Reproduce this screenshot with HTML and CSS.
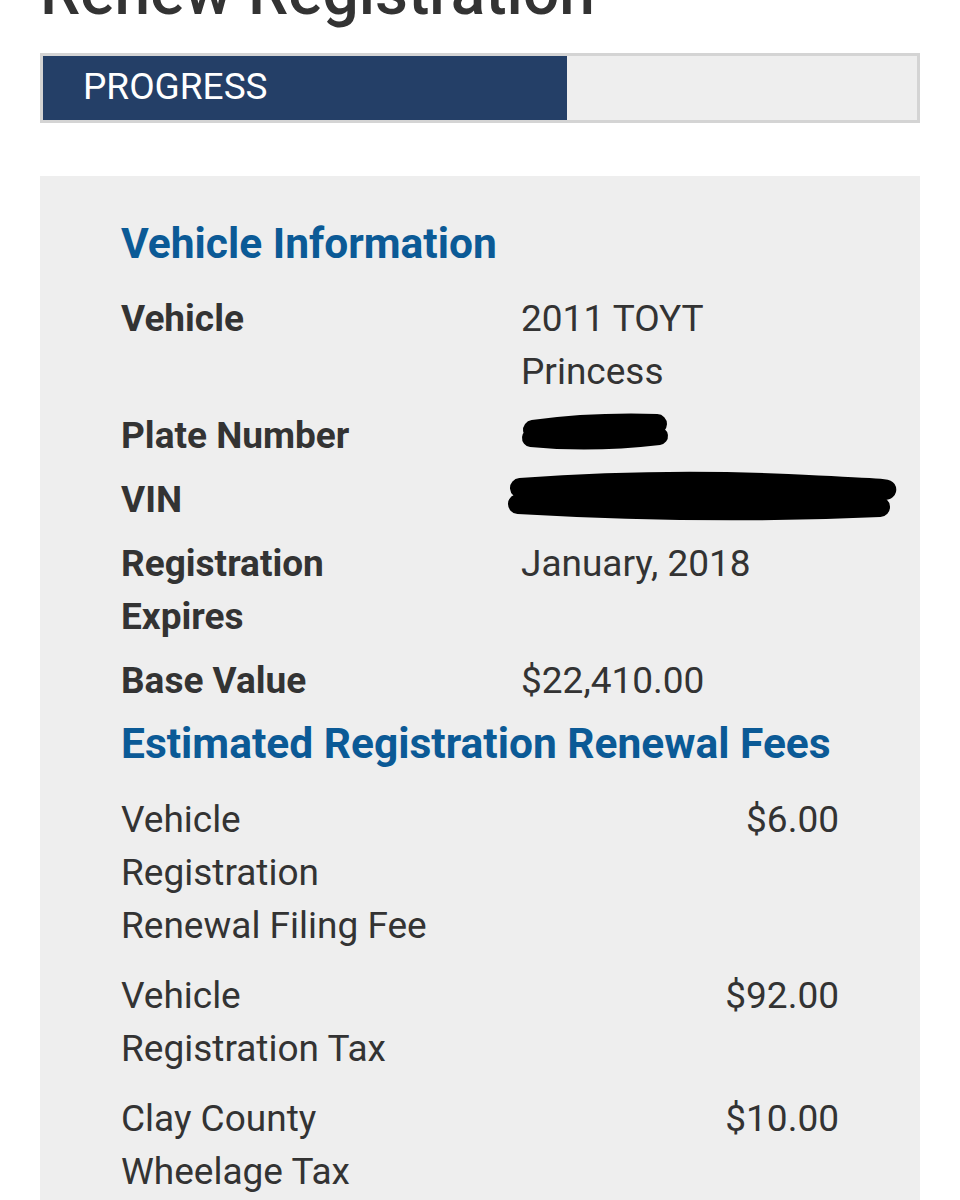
FILE: index.html
```html
<!DOCTYPE html>
<html lang="en">
<head>
  <meta charset="UTF-8">
  <meta name="viewport" content="width=device-width, initial-scale=1.0">
  <title>Renew Registration</title>
  <link rel="stylesheet" href="styles.css">
</head>
<body>
  <div class="page">
    <h1>Renew Registration</h1>

    <div class="progress">
      <div class="progress-fill" style="width: 60%;">PROGRESS</div>
    </div>

    <div class="panel">
      <h2>Vehicle Information</h2>
      <div class="info">
        <div class="label">Vehicle</div>
        <div class="value">2011 TOYT Princess</div>

        <div class="label">Plate Number</div>
        <div class="value">
          <svg class="redact plate" width="150" height="53" viewBox="0 0 150 53">
            <path d="M12 21 Q 70 13 136 15" stroke="#000" stroke-width="20" stroke-linecap="round" fill="none"/>
            <path d="M10 29 Q 70 35 138 27" stroke="#000" stroke-width="18" stroke-linecap="round" fill="none"/>
          </svg>
        </div>

        <div class="label">VIN</div>
        <div class="value">
          <svg class="redact vin" width="392" height="53" viewBox="0 0 392 53">
            <path d="M12 15 Q 150 5 280 11 T 368 17" stroke="#000" stroke-width="20" stroke-linecap="round" fill="none"/>
            <path d="M30 24 L 362 25" stroke="#000" stroke-width="20" stroke-linecap="round" fill="none"/>
            <path d="M10 31 Q 200 42 372 34" stroke="#000" stroke-width="20" stroke-linecap="round" fill="none"/>
          </svg>
        </div>

        <div class="label">Registration Expires</div>
        <div class="value">January, 2018</div>

        <div class="label">Base Value</div>
        <div class="value">$22,410.00</div>
      </div>

      <h2 class="fees-title">Estimated Registration Renewal Fees</h2>
      <div class="fees">
        <div class="fee">
          <div class="fee-name">Vehicle Registration Renewal Filing Fee</div>
          <div class="fee-amount">$6.00</div>
        </div>
        <div class="fee">
          <div class="fee-name">Vehicle Registration Tax</div>
          <div class="fee-amount">$92.00</div>
        </div>
        <div class="fee">
          <div class="fee-name">Clay County Wheelage Tax</div>
          <div class="fee-amount">$10.00</div>
        </div>
      </div>
    </div>
  </div>
</body>
</html>
```

FILE: styles.css
```css
body {
  font-family: 'Roboto', 'Liberation Sans', sans-serif;
  background-color: #fff;
  color: #333;
  margin: 0;
  padding: 0;
}
.page {
  padding: 0 40px;
}
h1 {
  font-size: 64px;
  font-weight: 500;
  line-height: 70px;
  margin: -42px 0 0;
  color: #333;
}
.progress {
  margin-top: 25px;
  height: 64px;
  border: 3px solid #d4d4d4;
  background-color: #eee;
}
.progress-fill {
  height: 100%;
  background-color: #243f67;
  color: #fff;
  font-size: 37px;
  line-height: 62px;
  padding-left: 40px;
  box-sizing: border-box;
}
.panel {
  margin-top: 53px;
  background-color: #eee;
  padding: 41px 81px 60px;
}
h2 {
  font-size: 42.5px;
  font-weight: 700;
  line-height: 53px;
  color: #0b5a96;
  margin: 0;
}
.info {
  display: grid;
  grid-template-columns: 300px 300px;
  column-gap: 100px;
  row-gap: 11px;
  margin-top: 22px;
  font-size: 37px;
  line-height: 53px;
}
.info .label {
  font-weight: 700;
}
.redact {
  display: block;
  overflow: visible;
}
.redact.vin {
  margin-left: -13px;
}
.fees-title {
  margin-top: 10px;
}
.fees {
  margin-top: 23px;
  display: flex;
  flex-direction: column;
  gap: 17px;
  font-size: 37px;
  line-height: 53px;
}
.fee {
  display: flex;
  justify-content: space-between;
}
.fee-name {
  width: 315px;
}
.fee-amount {
  text-align: right;
}
```
